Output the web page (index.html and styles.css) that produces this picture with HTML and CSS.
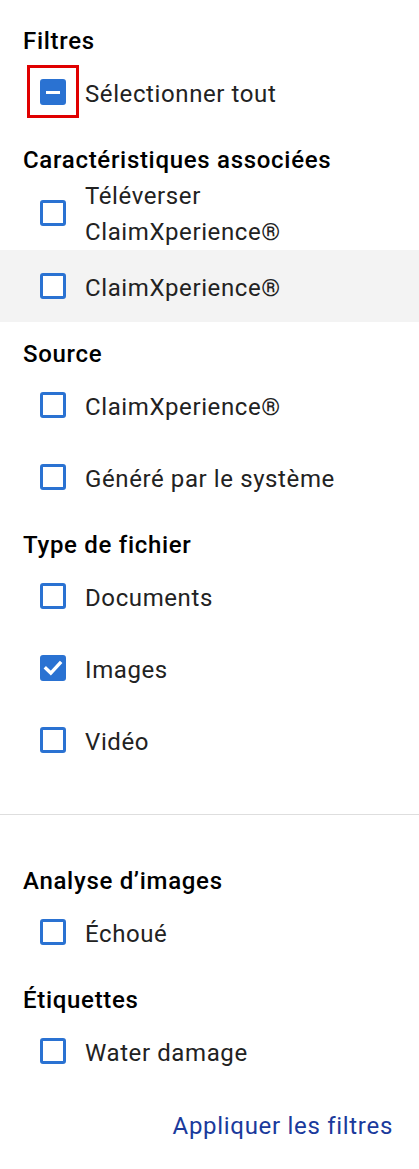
FILE: index.html
```html
<!DOCTYPE html>
<html lang="fr">
<head>
<meta charset="utf-8">
<title>Filtres</title>
<link rel="stylesheet" href="styles.css">
</head>
<body>
<div class="panel">
  <section class="group first">
    <h2 class="group-title">Filtres</h2>
    <label class="row">
      <span class="box indeterminate focused"><span class="bar"></span></span>
      <span class="label">Sélectionner tout</span>
    </label>
  </section>

  <section class="group">
    <h2 class="group-title">Caractéristiques associées</h2>
    <label class="row">
      <span class="box"></span>
      <span class="label narrow">Téléverser ClaimXperience®</span>
    </label>
    <label class="row hover">
      <span class="box"></span>
      <span class="label">ClaimXperience®</span>
    </label>
  </section>

  <section class="group">
    <h2 class="group-title">Source</h2>
    <label class="row">
      <span class="box"></span>
      <span class="label">ClaimXperience®</span>
    </label>
    <label class="row">
      <span class="box"></span>
      <span class="label">Généré par le système</span>
    </label>
  </section>

  <section class="group">
    <h2 class="group-title">Type de fichier</h2>
    <label class="row">
      <span class="box"></span>
      <span class="label">Documents</span>
    </label>
    <label class="row">
      <span class="box checked">
        <svg viewBox="0 0 26 26" width="26" height="26"><path d="M6 13.5l4.8 4.6 9.2-10" fill="none" stroke="#fff" stroke-width="3.4" stroke-linecap="square" stroke-linejoin="miter"/></svg>
      </span>
      <span class="label">Images</span>
    </label>
    <label class="row">
      <span class="box"></span>
      <span class="label">Vidéo</span>
    </label>
  </section>

  <hr class="divider">

  <section class="group after-divider">
    <h2 class="group-title">Analyse d’images</h2>
    <label class="row">
      <span class="box"></span>
      <span class="label">Échoué</span>
    </label>
  </section>

  <section class="group">
    <h2 class="group-title">Étiquettes</h2>
    <label class="row">
      <span class="box"></span>
      <span class="label">Water damage</span>
    </label>
  </section>

  <div class="actions">
    <button class="apply" type="button">Appliquer les filtres</button>
  </div>
</div>
</body>
</html>
```

FILE: styles.css
```css
*, *::before, *::after { box-sizing: border-box; }

html, body {
  margin: 0;
  padding: 0;
  background: #ffffff;
}

body {
  font-family: Roboto, "Liberation Sans", Arial, sans-serif;
  width: 419px;
  height: 1169px;
  overflow: hidden;
}

.panel {
  display: flex;
  flex-direction: column;
  padding-top: 27px;
}

.group {
  display: flex;
  flex-direction: column;
  margin-top: 18px;
}

.group.first { margin-top: 0; }

.group-title {
  margin: 0 0 1px;
  padding-left: 23px;
  font-size: 24px;
  line-height: 28px;
  font-weight: 500;
  letter-spacing: 0.7px;
  color: #000;
}

.row {
  display: flex;
  align-items: center;
  gap: 19px;
  min-height: 72px;
  padding: 0 16px 0 40px;
}

.row.hover { background: #f3f3f3; }

.label {
  font-size: 24px;
  line-height: 36px;
  letter-spacing: 0.6px;
  color: #222;
  padding-top: 3px;
}

.label.narrow { max-width: 220px; }

.box {
  position: relative;
  flex: none;
  width: 26px;
  height: 26px;
  border: 3px solid #2a72d2;
  border-radius: 3px;
  display: flex;
  align-items: center;
  justify-content: center;
  background: #fff;
}

.box.checked,
.box.indeterminate {
  background: #2a72d2;
  border-color: #2a72d2;
}

.box.checked svg {
  flex: none;
  margin: -3px;
}

.box .bar {
  width: 14px;
  height: 3px;
  background: #fff;
}

.box.focused::after {
  content: "";
  position: absolute;
  left: -16px;
  top: -17px;
  width: 52px;
  height: 53px;
  border: 3px solid #e00000;
}

.divider {
  margin: 38px 0 0;
  border: 0;
  border-top: 1px solid #dedede;
}

.group.after-divider { margin-top: 52px; }

.actions {
  display: flex;
  justify-content: flex-end;
  margin-top: 21px;
  padding-right: 26px;
}

.apply {
  border: 0;
  background: none;
  padding: 0;
  font-family: inherit;
  font-size: 24px;
  line-height: 36px;
  letter-spacing: 0.7px;
  color: #1a3a9c;
  cursor: pointer;
}
```
